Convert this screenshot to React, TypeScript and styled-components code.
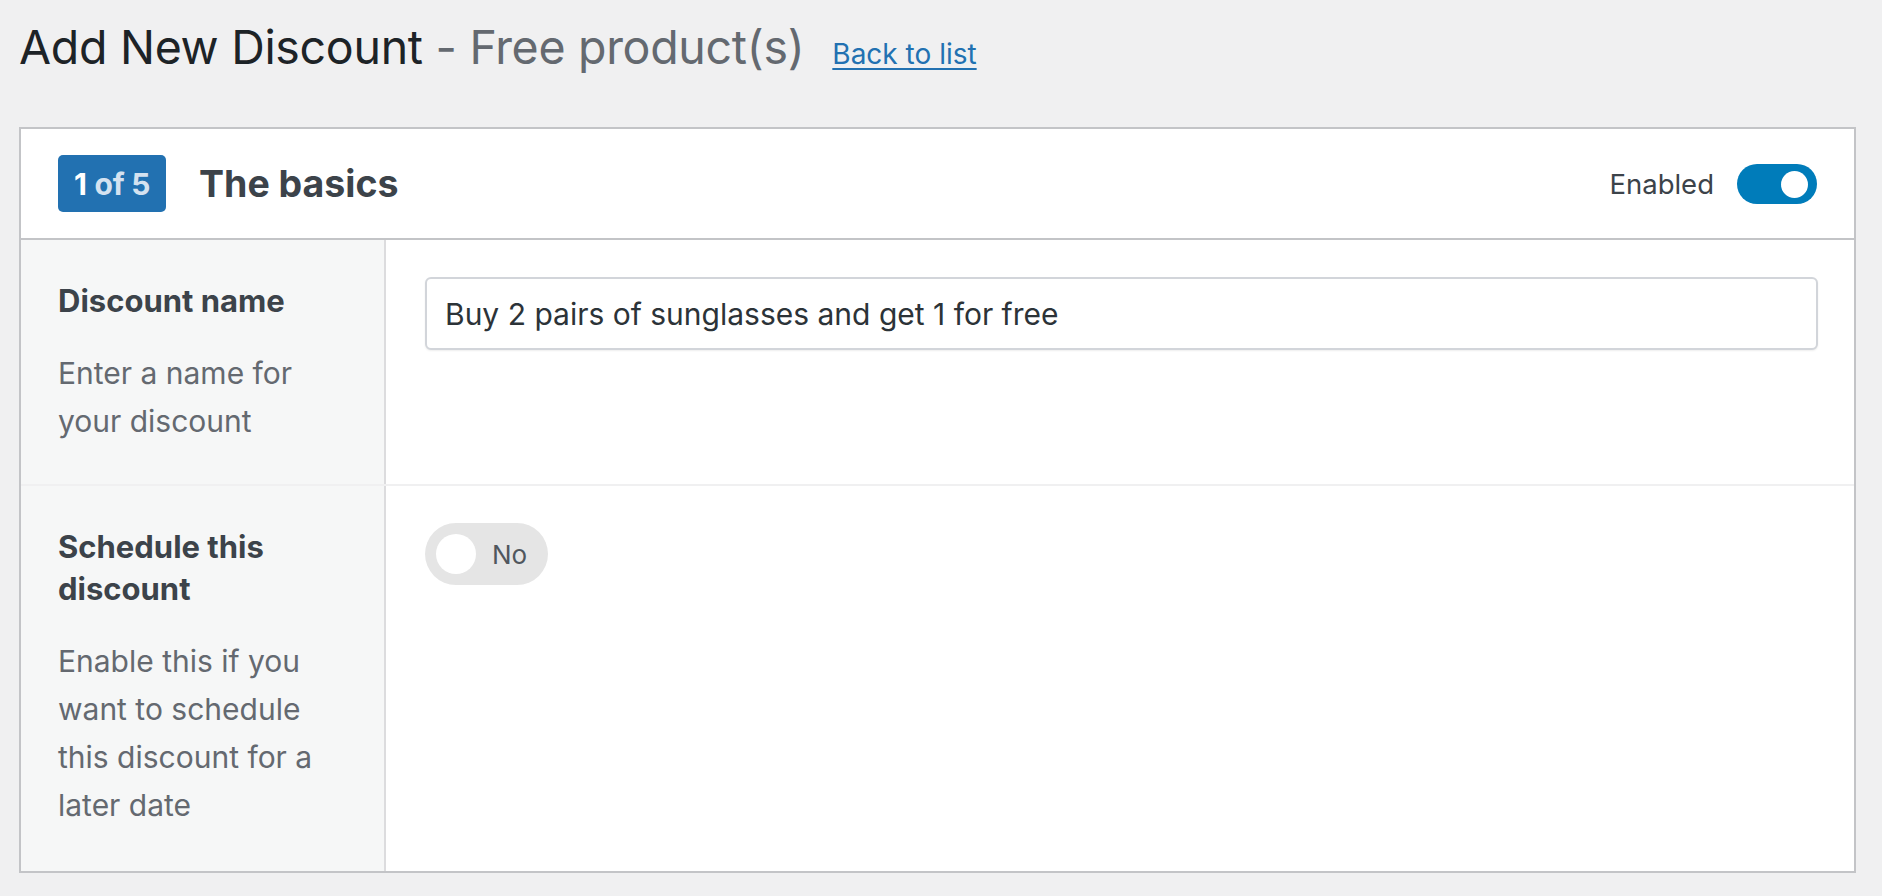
import React, {useState} from 'react';
import styled, {createGlobalStyle} from 'styled-components';

const GlobalStyle = createGlobalStyle`
    html, body {
        margin: 0;
        padding: 0;
        background-color: #f0f0f1;
        font-family: Inter, "Noto Sans", "Liberation Sans", sans-serif;
        color: #3c434a;
    }
`;

const Page = styled.div`
    padding: 17px 26px 26px 19px;
`;

const TitleRow = styled.div`
    display: flex;
    align-items: baseline;
    gap: 28px;
    height: 110px;
`;

const Title = styled.h1`
    margin: 0;
    font-size: 46.5px;
    font-weight: 400;
    line-height: 60px;
    letter-spacing: -0.3px;
    color: #1d2327;

    span {
        color: #646970;
    }
`;

const BackLink = styled.a`
    font-size: 28px;
    color: #2271b1;
    text-decoration: underline;
    text-underline-offset: 4px;
    cursor: pointer;
`;

const Card = styled.div`
    background-color: #fff;
    border: 2px solid #c3c4c7;
`;

const CardHeader = styled.div`
    display: flex;
    align-items: center;
    justify-content: space-between;
    height: 109px;
    padding: 0 37px;
    border-bottom: 2px solid #c3c4c7;
`;

const HeaderLeft = styled.div`
    display: flex;
    align-items: center;
    gap: 33px;
`;

const StepBadge = styled.div`
    display: flex;
    align-items: center;
    justify-content: center;
    width: 108px;
    height: 57px;
    border-radius: 5px;
    background-color: #2271b1;
    color: #fff;
    font-size: 30px;
    font-weight: 700;
    letter-spacing: -0.3px;

    span {
        color: #d4e2f0;
        margin-left: 8px;
    }
`;

const SectionTitle = styled.h2`
    margin: 0;
    font-size: 37.5px;
    font-weight: 700;
    color: #3c434a;
`;

const HeaderRight = styled.label`
    display: flex;
    align-items: center;
    gap: 23px;
    font-size: 27.5px;
    color: #3c434a;
    cursor: pointer;
`;

const Switch = styled.button<{ $on: boolean }>`
    position: relative;
    width: 80px;
    height: 40px;
    border: 0;
    padding: 0;
    border-radius: 20px;
    background-color: ${p => p.$on ? '#007cba' : '#e5e5e5'};
    cursor: pointer;

    &::after {
        content: '';
        position: absolute;
        top: 7px;
        left: ${p => p.$on ? '44px' : '9px'};
        width: 27px;
        height: 27px;
        border-radius: 50%;
        background-color: #fff;
    }
`;

const Row = styled.div<{ $height: number }>`
    display: grid;
    grid-template-columns: 365px 1fr;
    min-height: ${p => p.$height}px;
    border-bottom: 2px solid #f0f0f1;

    &:last-child {
        border-bottom: 0;
    }
`;

const LabelCell = styled.div`
    background-color: #f6f7f7;
    border-right: 2px solid #dcdcde;
    padding: 40px 36px 36px 37px;
`;

const Label = styled.div`
    font-size: 31px;
    font-weight: 700;
    line-height: 42px;
    color: #3c434a;
`;

const Description = styled.div`
    margin-top: 27px;
    font-size: 30px;
    line-height: 48px;
    color: #646970;
`;

const FieldCell = styled.div`
    padding: 37px 36px 36px 39px;
`;

const TextInput = styled.input`
    box-sizing: border-box;
    width: 100%;
    height: 73px;
    padding: 0 18px;
    border: 2px solid #d2d5da;
    border-radius: 6px;
    box-shadow: 0 1px 2px rgba(0, 0, 0, 0.07);
    font-family: inherit;
    font-size: 30px;
    color: #2c3338;
    outline: none;
`;

const PillToggle = styled.button`
    display: flex;
    align-items: center;
    gap: 16px;
    width: 123px;
    height: 62px;
    padding: 0 11px;
    border: 0;
    border-radius: 31px;
    background-color: #e5e5e5;
    font-family: inherit;
    font-size: 26px;
    color: #50575e;
    cursor: pointer;
`;

const Knob = styled.span`
    width: 40px;
    height: 40px;
    border-radius: 50%;
    background-color: #fff;
`;

const App = () => {
    const [enabled, setEnabled] = useState(true);
    const [name, setName] = useState('Buy 2 pairs of sunglasses and get 1 for free');
    const [scheduled, setScheduled] = useState(false);

    return (
        <>
            <GlobalStyle/>
            <Page>
                <TitleRow>
                    <Title>Add New Discount <span>- Free product(s)</span></Title>
                    <BackLink>Back to list</BackLink>
                </TitleRow>

                <Card>
                    <CardHeader>
                        <HeaderLeft>
                            <StepBadge>1<span>of 5</span></StepBadge>
                            <SectionTitle>The basics</SectionTitle>
                        </HeaderLeft>
                        <HeaderRight>
                            Enabled
                            <Switch $on={enabled} onClick={() => setEnabled(!enabled)} aria-label={'Enabled'}/>
                        </HeaderRight>
                    </CardHeader>

                    <Row $height={244}>
                        <LabelCell>
                            <Label>Discount name</Label>
                            <Description>Enter a name for your discount</Description>
                        </LabelCell>
                        <FieldCell>
                            <TextInput value={name} onChange={e => setName(e.target.value)}/>
                        </FieldCell>
                    </Row>

                    <Row $height={385}>
                        <LabelCell>
                            <Label>Schedule this discount</Label>
                            <Description>Enable this if you want to schedule this discount for a later date</Description>
                        </LabelCell>
                        <FieldCell>
                            <PillToggle onClick={() => setScheduled(!scheduled)}>
                                <Knob/>
                                {scheduled ? 'Yes' : 'No'}
                            </PillToggle>
                        </FieldCell>
                    </Row>
                </Card>
            </Page>
        </>
    );
};

export default App;
